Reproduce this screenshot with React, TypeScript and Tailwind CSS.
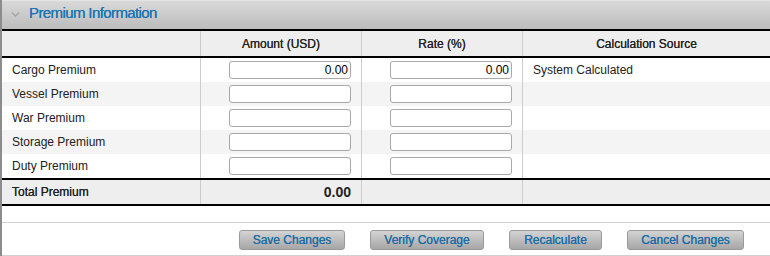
import React from "react";
import { ChevronDown } from "lucide-react";

const rows = [
  { label: "Cargo Premium", amount: "0.00", rate: "0.00", source: "System Calculated" },
  { label: "Vessel Premium", amount: "", rate: "", source: "" },
  { label: "War Premium", amount: "", rate: "", source: "" },
  { label: "Storage Premium", amount: "", rate: "", source: "" },
  { label: "Duty Premium", amount: "", rate: "", source: "" },
];

const buttons = [
  { label: "Save Changes", width: "w-[106px]" },
  { label: "Verify Coverage", width: "w-[114px]" },
  { label: "Recalculate", width: "w-[93px]" },
  { label: "Cancel Changes", width: "w-[117px]" },
];

const grid = "grid grid-cols-[198px_161px_161px_1fr]";

function Field({ value }: { value: string }) {
  return (
    <input
      readOnly
      value={value}
      className="w-[122px] h-[18px] rounded-[3px] border border-[#a9a9a9] bg-white px-[2px] text-right text-[12px] text-black outline-none"
    />
  );
}

export default function App() {
  return (
    <div
      className="w-[770px] h-[256px] bg-white border-l-2 border-[#8c8c8c] overflow-hidden"
      style={{ fontFamily: '"Liberation Sans", Arial, sans-serif' }}
    >
      {/* Panel header */}
      <div className="h-[29px] pb-[3px] flex items-center bg-gradient-to-b from-[#d9d9d9] to-[#bcbcbc] border-t border-[#e4e4e4]">
        <ChevronDown size={13} strokeWidth={2.5} className="ml-[7px] mt-[2px] text-[#a0a0a0]" />
        <span className="ml-[7px] text-[15px] tracking-[-0.6px] text-[#1b74b3] [text-shadow:0_0_0.5px_#1b74b3]">
          Premium Information
        </span>
      </div>

      {/* Column headers */}
      <div className={`${grid} h-[29px] bg-[#eeeeee] border-t-2 border-b-2 border-black text-[12px] text-[#222] [text-shadow:0_0_0.4px_#222]`}>
        <div />
        <div className="border-l border-[#cccccc] flex items-center justify-center">Amount (USD)</div>
        <div className="border-l border-[#cccccc] flex items-center justify-center">Rate (%)</div>
        <div className="border-l border-[#cccccc] flex items-center justify-center">Calculation Source</div>
      </div>

      {/* Premium rows */}
      {rows.map((row, i) => (
        <div
          key={row.label}
          className={`${grid} h-[24px] text-[12px] text-[#222] ${i % 2 === 1 ? "bg-[#f4f4f4]" : "bg-white"}`}
        >
          <div className="pl-[10px] flex items-center">{row.label}</div>
          <div className="border-l border-[#cccccc] flex items-center justify-end pr-[10px]">
            <Field value={row.amount} />
          </div>
          <div className="border-l border-[#cccccc] flex items-center justify-end pr-[10px]">
            <Field value={row.rate} />
          </div>
          <div className="border-l border-[#cccccc] flex items-center pl-[10px]">{row.source}</div>
        </div>
      ))}

      {/* Total */}
      <div className={`${grid} h-[28px] bg-[#eeeeee] border-t-2 border-b-2 border-black text-[#222]`}>
        <div className="pl-[10px] flex items-center text-[12px] [text-shadow:0_0_0.4px_#222]">Total Premium</div>
        <div className="border-l border-[#cccccc] flex items-center justify-end pr-[10px] text-[14px] font-bold">
          0.00
        </div>
        <div className="border-l border-[#cccccc]" />
        <div className="border-l border-[#cccccc]" />
      </div>

      {/* Actions */}
      <div className="mt-[16px] border-t border-b border-[#d0d0d0] h-[34px] flex items-start pt-[7px] justify-end gap-[25px] pr-[26px]">
        {buttons.map((b) => (
          <button
            key={b.label}
            className={`${b.width} h-[20px] rounded-[3px] border border-[#9a9a9a] bg-gradient-to-b from-[#d4d4d4] to-[#a6a6a6] text-[12px] text-[#1b6da6] [text-shadow:0_0_0.5px_#1b6da6]`}
          >
            {b.label}
          </button>
        ))}
      </div>
    </div>
  );
}
